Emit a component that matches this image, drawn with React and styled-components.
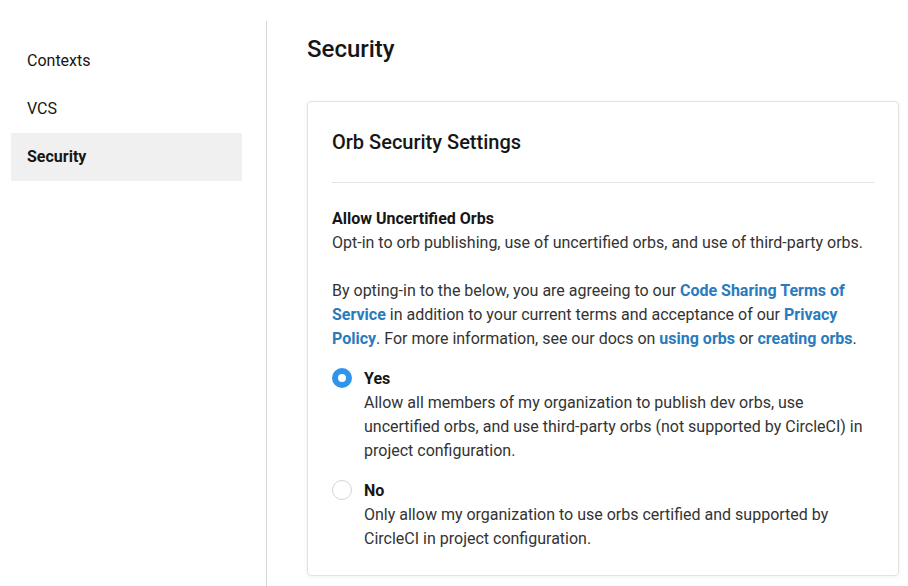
import React, { useState } from 'react';
import styled, { createGlobalStyle } from 'styled-components';

const GlobalStyle = createGlobalStyle`
  html, body {
    margin: 0;
    padding: 0;
    background: #fff;
    font-family: Roboto, "Liberation Sans", sans-serif;
    color: #161616;
  }
`;

const Page = styled.div`
  display: flex;
  height: 586px;
  overflow: hidden;
`;

const Sidebar = styled.nav`
  width: 266px;
  flex-shrink: 0;
  padding: 36px 24px 0 11px;
  box-sizing: border-box;
`;

const NavItem = styled.div`
  height: 48px;
  display: flex;
  align-items: center;
  padding-left: 16px;
  padding-bottom: ${(p) => (p.$active ? '1px' : '0')};
  box-sizing: border-box;
  font-size: 16px;
  font-weight: ${(p) => (p.$active ? 700 : 400)};
  background: ${(p) => (p.$active ? '#f0f0f0' : 'transparent')};
  margin-top: ${(p) => (p.$active ? '1px' : '0')};
  color: #161616;
`;

const Main = styled.main`
  flex: 1;
  margin-top: 21px;
  border-left: 1px solid #d6d6d6;
  padding: 0 9px 0 40px;
`;

const Title = styled.h1`
  margin: 13px 0 0;
  font-size: 24px;
  font-weight: 500;
  line-height: 30px;
`;

const Card = styled.section`
  margin-top: 37px;
  border: 1px solid #e3e3e3;
  border-radius: 4px;
  box-shadow: 0 1px 4px rgba(0, 0, 0, 0.06);
  padding: 24px 24px 24px;
`;

const CardTitle = styled.h2`
  margin: 1px 0 0;
  font-size: 20px;
  font-weight: 500;
  line-height: 30px;
`;

const Divider = styled.hr`
  margin: 25px 0 24px;
  border: 0;
  border-top: 1px solid #e3e3e3;
`;

const Text = styled.p`
  margin: 0 0 ${(p) => p.$gap || 0}px;
  font-size: 16px;
  line-height: 24px;
  color: #333;
`;

const Strong = styled.strong`
  display: block;
  font-weight: 700;
  color: #161616;
`;

const Link = styled.a`
  color: #2a7bbd;
  font-weight: 700;
  text-decoration: none;
`;

const Options = styled.div`
  display: flex;
  flex-direction: column;
  gap: 16px;
  margin-top: 16px;
`;

const Option = styled.label`
  display: grid;
  grid-template-columns: 20px 1fr;
  column-gap: 12px;
  cursor: pointer;
`;

const Radio = styled.span`
  width: 20px;
  height: 20px;
  box-sizing: border-box;
  border-radius: 50%;
  margin-top: 1px;
  border: ${(p) => (p.$checked ? '6px solid #2f95ec' : '1px solid #d4d4d4')};
  background: #fff;
`;

const OptionLabel = styled.div`
  font-size: 16px;
  line-height: 24px;
  font-weight: 700;
  color: #161616;
`;

const OptionDesc = styled.div`
  font-size: 16px;
  line-height: 24px;
  color: #333;
`;

const options = [
  {
    key: 'yes',
    label: 'Yes',
    desc: 'Allow all members of my organization to publish dev orbs, use uncertified orbs, and use third-party orbs (not supported by CircleCI) in project configuration.',
  },
  {
    key: 'no',
    label: 'No',
    desc: 'Only allow my organization to use orbs certified and supported by CircleCI in project configuration.',
  },
];

export default function App() {
  const [value, setValue] = useState('yes');

  return (
    <>
      <GlobalStyle />
      <Page>
        <Sidebar>
          <NavItem>Contexts</NavItem>
          <NavItem>VCS</NavItem>
          <NavItem $active>Security</NavItem>
        </Sidebar>
        <Main>
          <Title>Security</Title>
          <Card>
            <CardTitle>Orb Security Settings</CardTitle>
            <Divider />
            <Text $gap={24}>
              <Strong>Allow Uncertified Orbs</Strong>
              Opt-in to orb publishing, use of uncertified orbs, and use of third-party orbs.
            </Text>
            <Text>
              By opting-in to the below, you are agreeing to our{' '}
              <Link href="#">Code Sharing Terms of Service</Link> in addition to your current
              terms and acceptance of our <Link href="#">Privacy Policy</Link>. For more
              information, see our docs on <Link href="#">using orbs</Link> or{' '}
              <Link href="#">creating orbs</Link>.
            </Text>
            <Options>
              {options.map((o) => (
                <Option key={o.key} onClick={() => setValue(o.key)}>
                  <Radio $checked={value === o.key} />
                  <div>
                    <OptionLabel>{o.label}</OptionLabel>
                    <OptionDesc>{o.desc}</OptionDesc>
                  </div>
                </Option>
              ))}
            </Options>
          </Card>
        </Main>
      </Page>
    </>
  );
}
